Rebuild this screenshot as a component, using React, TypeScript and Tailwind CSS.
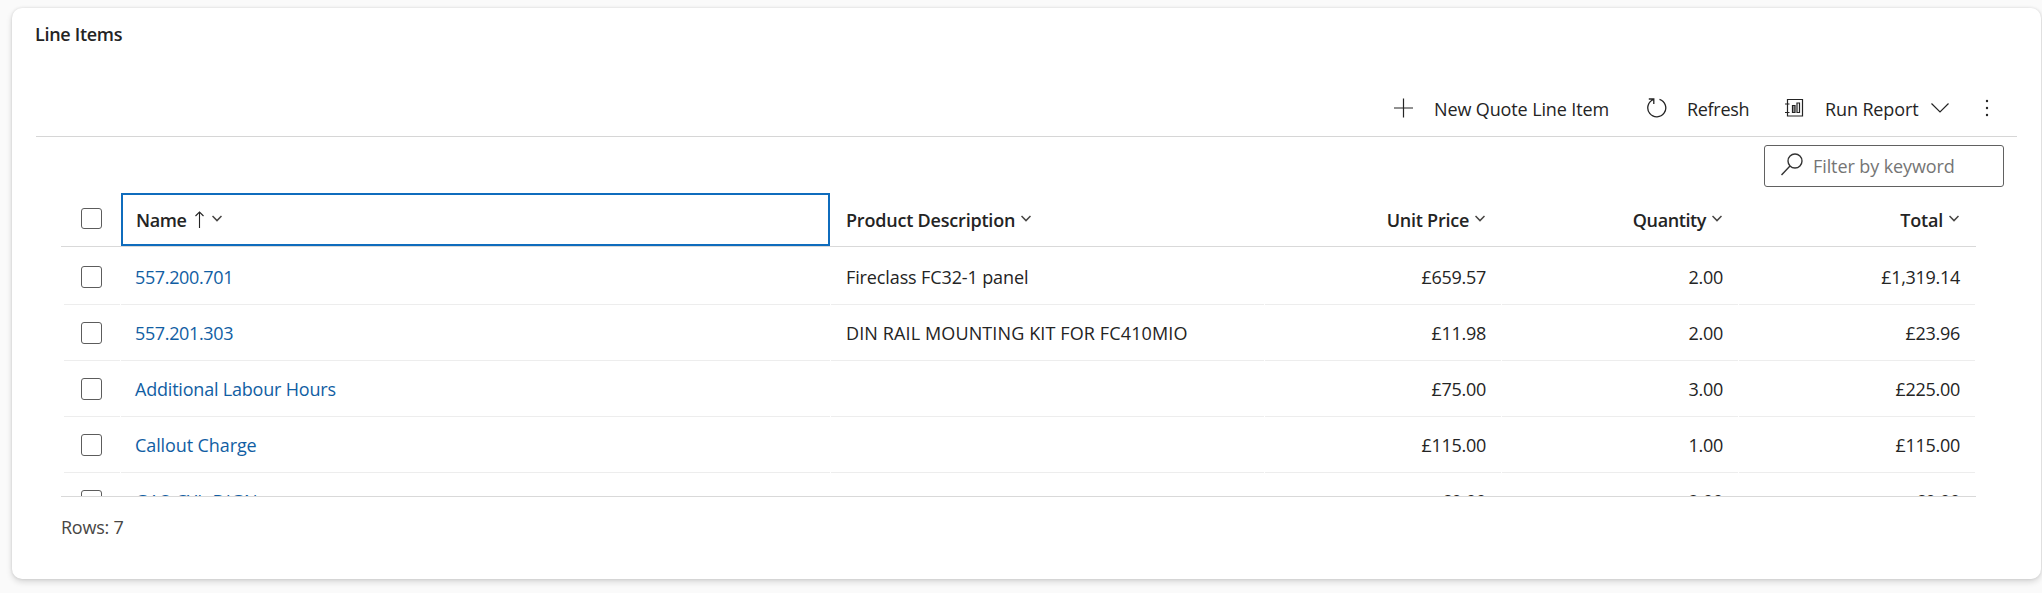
import React from "react";

const Chevron = () => (
  <svg className="-mt-[2px] ml-[6px] shrink-0" width="10" height="7" viewBox="0 0 10 7" fill="none" stroke="#484644" strokeWidth="1.5">
    <path d="M0.5 1 L5 5.6 L9.5 1" />
  </svg>
);

type Row = { name: string; nameCls: string; desc: string; descCls: string; unit: string; qty: string; total: string };

const rows: Row[] = [
  { name: "557.200.701", nameCls: "tracking-[-0.36px]", desc: "Fireclass FC32-1 panel", descCls: "tracking-[-0.12px]", unit: "£659.57", qty: "2.00", total: "£1,319.14" },
  { name: "557.201.303", nameCls: "tracking-[-0.36px]", desc: "DIN RAIL MOUNTING KIT FOR FC410MIO", descCls: "tracking-[0.12px]", unit: "£11.98", qty: "2.00", total: "£23.96" },
  { name: "Additional Labour Hours", nameCls: "tracking-[-0.2px]", desc: "", descCls: "", unit: "£75.00", qty: "3.00", total: "£225.00" },
  { name: "Callout Charge", nameCls: "tracking-[-0.1px]", desc: "", descCls: "", unit: "£115.00", qty: "1.00", total: "£115.00" },
  { name: "GAS-CYL-DIGN", nameCls: "tracking-[0.1px]", desc: "", descCls: "", unit: "£0.00", qty: "2.00", total: "£0.00" },
];

const cell = "flex h-full items-center border-b border-[#ededed]";

export default function App() {
  return (
    <div className="h-[593px] w-[2042px] overflow-hidden bg-[#fafafa] pl-3 pt-2 font-['Open_Sans',sans-serif] text-[18px] leading-6 text-[#242424]">
      <section className="flex h-[571px] w-[2029px] flex-col rounded-[10px] bg-white shadow-[0_3px_6px_rgba(0,0,0,0.14),0_0_3px_rgba(0,0,0,0.12)]">
        <h2 className="ml-[23px] mt-[14px] h-6 font-semibold tracking-[-0.3px]">Line Items</h2>
        <div className="ml-6 mt-[36px] flex h-[55px] w-[1981px] items-center border-b border-[#d6d6d6]">
          <button className="ml-[1358px] flex w-[253px] items-center">
            <svg className="-mt-[3px]" width="20" height="20" viewBox="0 0 20 20" fill="none" stroke="#242424" strokeWidth="1.2"><path d="M9.500 0.5v19M0 10h19" /></svg>
            <span className="ml-[20px] whitespace-nowrap tracking-[-0.12px]">New Quote Line Item</span>
          </button>
          <button className="flex w-[138px] items-center">
            <svg className="-mt-[3px]" width="20" height="20" viewBox="0 0 20 20" fill="none" stroke="#242424" strokeWidth="1.3">
              <path d="M12.500 1.3A9 9 0 1 1 6.500 1.500M1.800 1h5v5" />
            </svg>
            <span className="ml-[20px] whitespace-nowrap tracking-[-0.3px]">Refresh</span>
          </button>
          <button className="flex items-center">
            <svg className="-mt-[3px]" width="20" height="20" viewBox="0 0 20 20" fill="none" stroke="#242424" strokeWidth="1.2">
              <path d="M2.500 1.500h15v16.500h-15zM0 6h4.500M0 14.500h4.500M12 5h2.500v9.500h-2.500z" />
              <path d="M7.500 7.500h2.500v7h-2.500z" fill="#a0a0a0" />
            </svg>
            <span className="ml-[20px] whitespace-nowrap tracking-[-0.12px]">Run Report</span>
            <svg className="-mt-[3px] ml-[12px]" width="18" height="10" viewBox="0 0 18 10" fill="none" stroke="#242424" strokeWidth="1.2"><path d="M0.5 0.5L9 9l8.500-8.500" /></svg>
          </button>
          <svg className="-mt-[2px] ml-[36px]" width="4" height="18" viewBox="0 0 4 18" fill="#242424">
            <circle cx="2" cy="2" r="1.2" /><circle cx="2" cy="9" r="1.2" /><circle cx="2" cy="16" r="1.2" />
          </svg>
        </div>
        <div className="ml-[1752px] mt-2 flex h-[42px] w-[240px] items-center rounded-[3px] border border-[#616161] pl-4">
          <svg className="-mt-[3px]" width="23" height="23" viewBox="0 0 23 23" fill="none" stroke="#333" strokeWidth="1.4">
            <circle cx="14" cy="8" r="7" /><path d="M9 13L0.500 22" />
          </svg>
          <span className="ml-[9px] tracking-[-0.1px] text-[#757575]">Filter by keyword</span>
        </div>
        <div className="ml-[49px] mt-[6px] flex h-[54px] w-[1915px] border-b border-[#d9d9d9] font-semibold">
          <div className="w-[60px] pl-5 pt-[15px]"><span className="block h-[21px] w-[21px] rounded-[3px] border border-[#5c5c5c]" /></div>
          <div className="flex h-[53px] w-[709px] items-center border-2 border-[#0f6cbd] pl-[13px]">
            <span className="tracking-[-0.4px]">Name</span>
            <svg className="ml-[9px]" width="9" height="17" viewBox="0 0 9 17" fill="none" stroke="#242424" strokeWidth="1.1"><path d="M4.500 17V1M0.500 5L4.500 1l4 4" /></svg>
            <span className="ml-[2px] flex"><Chevron /></span>
          </div>
          <div className="flex w-[434px] items-center pl-4"><span className="tracking-[-0.2px]">Product Description</span><Chevron /></div>
          <div className="flex w-[237px] items-center justify-end pr-4"><span className="tracking-[-0.25px]">Unit Price</span><Chevron /></div>
          <div className="flex w-[237px] items-center justify-end pr-4"><span className="tracking-[-0.4px]">Quantity</span><Chevron /></div>
          <div className="flex w-[237px] items-center justify-end pr-4"><span className="tracking-[-0.2px]">Total</span><Chevron /></div>
        </div>
        <div className="ml-[49px] h-[250px] w-[1915px] overflow-hidden border-b border-[#d9d9d9] pt-[2px]">
          {rows.map((r) => (
            <div key={r.name} className="flex h-14 gap-px pl-[3px]">
              <div className={`${cell} w-14 pl-[17px]`}><span className="mt-px block h-[22px] w-[21px] rounded-[3px] border border-[#5c5c5c]" /></div>
              <div className={`${cell} w-[709px] pl-[14px] text-[#115ea3]`}><span className={r.nameCls}>{r.name}</span></div>
              <div className={`${cell} w-[433px] pl-[15px]`}><span className={r.descCls}>{r.desc}</span></div>
              <div className={`${cell} w-[236px] justify-end pr-[15px] tracking-[-0.3px]`}>{r.unit}</div>
              <div className={`${cell} w-[236px] justify-end pr-[15px] tracking-[-0.3px]`}>{r.qty}</div>
              <div className={`${cell} w-[236px] justify-end pr-[15px] tracking-[-0.3px]`}>{r.total}</div>
            </div>
          ))}
        </div>
        <div className="ml-[49px] mt-[18px] tracking-[-0.24px] text-[#484644]">Rows: 7</div>
      </section>
    </div>
  );
}
